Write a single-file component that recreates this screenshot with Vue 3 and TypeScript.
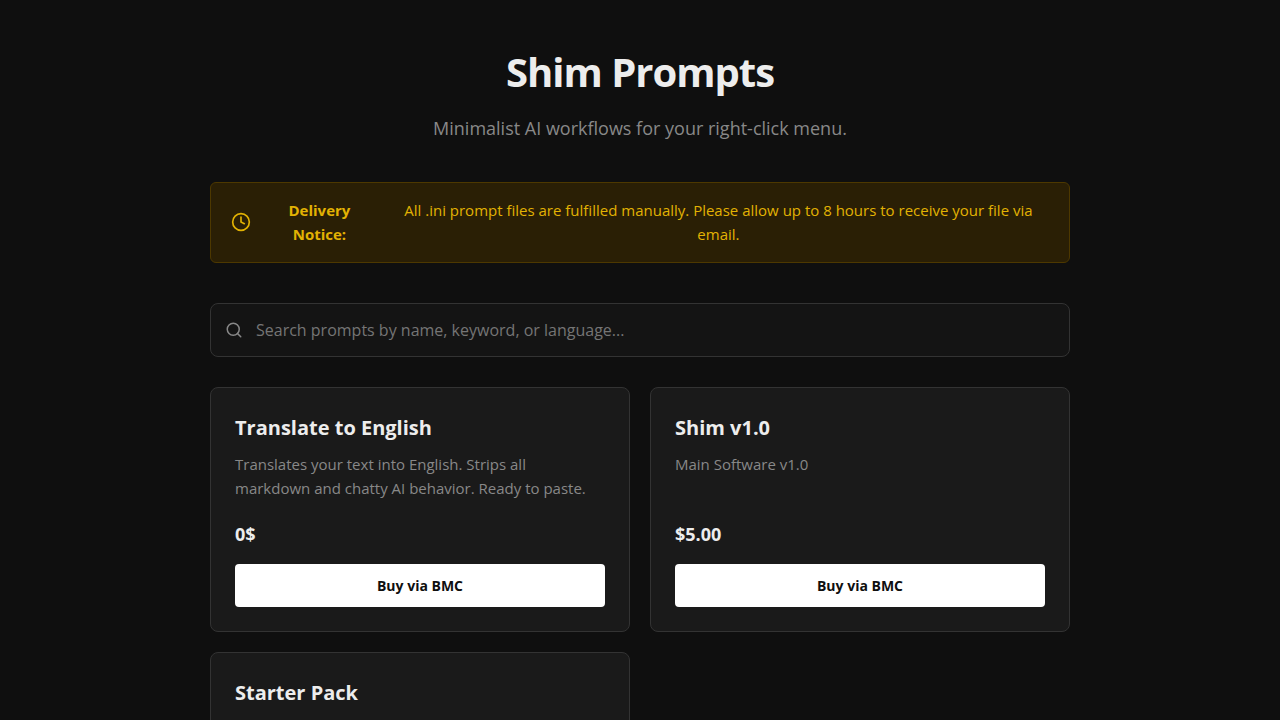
<script setup lang="ts">
import { ref, computed } from 'vue'

interface Product {
  name: string
  description: string
  price: string
}

const query = ref('')

const products: Product[] = [
  {
    name: 'Translate to English',
    description: 'Translates your text into English. Strips all markdown and chatty AI behavior. Ready to paste.',
    price: '0$',
  },
  { name: 'Shim v1.0', description: 'Main Software v1.0', price: '$5.00' },
  { name: 'Starter Pack', description: '', price: '' },
]

const visible = computed(() => {
  const q = query.value.trim().toLowerCase()
  return products.filter((p) => (p.name + ' ' + p.description).toLowerCase().includes(q))
})
</script>

<template>
  <main class="container">
    <header class="header">
      <h1>Shim Prompts</h1>
      <p>Minimalist AI workflows for your right-click menu.</p>
    </header>

    <div class="notice">
      <svg width="20" height="20" viewBox="0 0 24 24" fill="none" stroke="currentColor" stroke-width="2" stroke-linecap="round" stroke-linejoin="round" aria-hidden="true">
        <circle cx="12" cy="12" r="10" />
        <polyline points="12 6 12 12 16 14" />
      </svg>
      <strong>Delivery Notice:</strong>
      <span>All .ini prompt files are fulfilled manually. Please allow up to 8 hours to receive your file via email.</span>
    </div>

    <div class="search">
      <svg width="18" height="18" viewBox="0 0 24 24" fill="none" stroke="currentColor" stroke-width="2" stroke-linecap="round" stroke-linejoin="round" aria-hidden="true">
        <circle cx="11" cy="11" r="8" />
        <line x1="21" y1="21" x2="16.65" y2="16.65" />
      </svg>
      <input v-model="query" type="text" aria-label="Search prompts" placeholder="Search prompts by name, keyword, or language..." />
    </div>

    <section class="grid">
      <article v-for="p in visible" :key="p.name" class="card">
        <h2>{{ p.name }}</h2>
        <p v-if="p.description" class="description">{{ p.description }}</p>
        <div v-if="p.price" class="price">{{ p.price }}</div>
        <button v-if="p.price" type="button" class="buy">Buy via BMC</button>
      </article>
    </section>
  </main>
</template>

<style>
html {
  height: 100%;
  overflow: hidden;
}

body {
  height: 100%;
  margin: 0;
  overflow-y: auto;
  scrollbar-width: none;
  background: #0f0f0f;
}
</style>

<style scoped>
.container {
  box-sizing: border-box;
  max-width: 900px;
  margin: 0 auto;
  padding: 40px 20px;
  color: #ededed;
  font-family: "Open Sans", sans-serif;
  font-size: 16px;
  line-height: 1.6;
}

.header {
  margin-bottom: 40px;
  text-align: center;
}

h1 {
  margin: 0 0 10px;
  font-size: 40px;
  font-weight: 700;
  line-height: 64px;
  letter-spacing: -1px;
}

.header p {
  margin: 0;
  color: #888;
  font-size: 18px;
  line-height: 28px;
}

.notice {
  display: flex;
  align-items: center;
  justify-content: center;
  gap: 10px;
  margin-bottom: 40px;
  padding: 15px 20px 16px;
  border: 1px solid #4d3800;
  border-radius: 6px;
  background: #2a1f05;
  color: #e2b203;
  font-size: 15px;
  line-height: 24px;
  text-align: center;
}

.notice svg {
  flex-shrink: 0;
}

.search {
  position: relative;
  margin-bottom: 30px;
  color: #888;
}

.search svg {
  position: absolute;
  top: 50%;
  left: 15px;
  transform: translateY(-50%);
}

.search input {
  display: block;
  box-sizing: border-box;
  width: 100%;
  height: 54px;
  padding: 0 15px 0 45px;
  border: 1px solid #333;
  border-radius: 8px;
  outline: none;
  background: #141414;
  color: #ededed;
  font-family: inherit;
  font-size: 16px;
}

.search input::placeholder {
  color: #757575;
}

.grid {
  display: grid;
  grid-template-columns: repeat(auto-fill, minmax(280px, 1fr));
  gap: 20px;
}

.card {
  display: flex;
  flex-direction: column;
  padding: 24px;
  border: 1px solid #333;
  border-radius: 8px;
  background: #1a1a1a;
}

h2 {
  margin: 0 0 8px;
  font-size: 20px;
  font-weight: 700;
  line-height: 32px;
}

.description {
  flex-grow: 1;
  margin: 0 0 20px;
  color: #888;
  font-size: 15px;
  line-height: 24px;
}

.price {
  margin-bottom: 16px;
  font-size: 18px;
  font-weight: 700;
  line-height: 28px;
}

.buy {
  height: 43px;
  border: 0;
  border-radius: 4px;
  background: #fff;
  color: #0f0f0f;
  font-family: inherit;
  font-size: 14px;
  font-weight: 700;
  cursor: pointer;
}
</style>
